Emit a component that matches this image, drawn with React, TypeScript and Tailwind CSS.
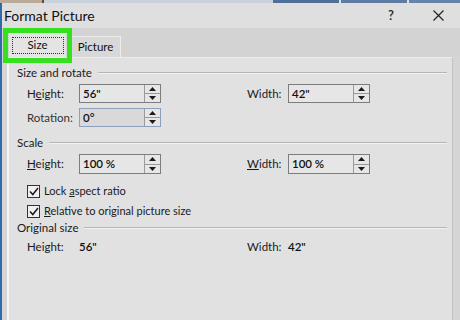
import type { ReactNode } from "react"

function Spinner() {
  return (
    <div className="flex flex-col w-[16px] h-full border-l border-[#9a9a9a] bg-[#e6e6e6]">
      <div className="flex-1 flex items-center justify-center border-b border-[#9a9a9a]">
        <svg width="7" height="4" viewBox="0 0 7 4"><path d="M0 4 L3.5 0 L7 4 Z" fill="#1a1a1a" /></svg>
      </div>
      <div className="flex-1 flex items-center justify-center">
        <svg width="7" height="4" viewBox="0 0 7 4"><path d="M0 0 L3.5 4 L7 0 Z" fill="#1a1a1a" /></svg>
      </div>
    </div>
  )
}

function NumBox({ value, disabled }: { value: string; disabled?: boolean }) {
  return (
    <div
      className={
        disabled
          ? "flex w-[82px] h-full border border-[#8aa0bc] bg-[#d9d9d9]"
          : "flex w-[82px] h-full border border-[#7c7c7c] bg-[#e6e6e6]"
      }
    >
      <div className="flex-1 pl-[3px] flex items-center text-[11.5px] font-semibold text-[#111]">{value}</div>
      <Spinner />
    </div>
  )
}

function Header({ title, className }: { title: string; className: string }) {
  return (
    <div className={"flex items-center h-[16px] pl-[8px] pr-[5px] gap-[6px] " + className}>
      <span className="text-[11.5px] text-[#1a1a1a] whitespace-nowrap">{title}</span>
      <div className="flex-1 flex flex-col">
        <div className="h-px bg-[#b5b5b5]" />
        <div className="h-px bg-[#f2f2f2]" />
      </div>
    </div>
  )
}

function Label({ children, w }: { children: ReactNode; w: string }) {
  return <span className={"text-[11.5px] text-[#1a1a1a] " + w}>{children}</span>
}

function Check({ children, className }: { children: ReactNode; className: string }) {
  return (
    <div className={"flex items-center h-[14px] pl-[18px] gap-[4px] " + className}>
      <div className="w-[13px] h-[13px] border border-[#333] bg-[#f0f0f0] flex items-center justify-center">
        <svg width="10" height="9" viewBox="0 0 10 9">
          <path d="M1 4.5 L3.8 7.5 L9 1" stroke="#1a1a1a" strokeWidth="1.5" fill="none" />
        </svg>
      </div>
      <span className="text-[11px] text-[#1a1a1a]">{children}</span>
    </div>
  )
}

export default function App() {
  return (
    <div className="w-[460px] h-[320px] flex flex-col overflow-hidden bg-[#d5d5d5] font-['Lato',sans-serif] relative">
      {/* windows behind the dialog */}
      <div className="h-[3px] flex">
        <div className="w-[42px] bg-[#b9ab98]" />
        <div className="w-[2px] bg-[#6a4a2a]" />
        <div className="w-[229px] bg-[#c9d1dc]" />
        <div className="w-[66px] bg-[#4f6f98]" />
        <div className="w-[2px] bg-[#e0e0e0]" />
        <div className="w-[66px] bg-[#5d7ba3]" />
        <div className="w-[2px] bg-[#e0e0e0]" />
        <div className="flex-1 bg-[#6683a8]" />
      </div>
      <div className="flex flex-1">
        <div className="w-[2px] bg-[#2f6aab]" />
        <div className="flex-1 flex flex-col">
          <div className="h-[25px] bg-[#dfdfdf] flex items-center pl-[2px] pr-[16px]">
            <span className="text-[14px] text-[#111] flex-1">Format Picture</span>
            <span className="text-[13px] font-semibold text-[#222] mr-[39px]">?</span>
            <svg width="11" height="11" viewBox="0 0 11 11">
              <path d="M0.5 0.5 L10.5 10.5 M10.5 0.5 L0.5 10.5" stroke="#222" strokeWidth="1.2" />
            </svg>
          </div>
          <div className="h-[29px] bg-[#d3d3d3] flex items-end pl-[7px]">
            <div className="w-[57px] h-[24px] bg-[#e4e4e4] flex items-center justify-center">
              <div className="w-[52px] h-[17px] border border-dotted border-[#333] flex items-center justify-center text-[11.5px] text-[#111]">
                Size
              </div>
            </div>
            <div className="w-[51px] h-[21px] ml-[4px] border border-b-0 border-[#ededed] bg-[#d8d8d8] flex items-center justify-center text-[11.5px] text-[#111]">
              Picture
            </div>
          </div>
          <div className="flex-1 flex pl-[5px] pr-[7px]">
            <div className="flex-1 flex flex-col bg-[#e1e1e1] border-l-2 border-l-[#f4f4f4] border-r border-r-[#c2c2c2] border-t border-t-[#ececec]">
              <Header title="Size and rotate" className="mt-[7px]" />
              <div className="flex items-center h-[19px] mt-[3px] pl-[18px]">
                <Label w="w-[52px]">H<span className="underline">e</span>ight:</Label>
                <NumBox value={'56"'} />
                <Label w="w-[41px] ml-[86px]">Width:</Label>
                <NumBox value={'42"'} />
              </div>
              <div className="flex items-center h-[19px] mt-[5px] pl-[18px]">
                <Label w="w-[52px] text-[#333]">Rotation:</Label>
                <NumBox value="0°" disabled />
              </div>
              <Header title="Scale" className="mt-[8px]" />
              <div className="flex items-center h-[20px] mt-[3px] pl-[18px]">
                <Label w="w-[52px]"><span className="underline">H</span>eight:</Label>
                <NumBox value="100 %" />
                <Label w="w-[41px] ml-[86px]"><span className="underline">W</span>idth:</Label>
                <NumBox value="100 %" />
              </div>
              <Check className="mt-[10px]">
                Lock <span className="underline">a</span>spect ratio
              </Check>
              <Check className="mt-[6px]">
                <span className="underline">R</span>elative to original picture size
              </Check>
              <Header title="Original size" className="mt-[2px]" />
              <div className="flex items-center h-[16px] mt-[3px] pl-[18px]">
                <Label w="w-[52px]">Height:</Label>
                <span className="w-[82px] text-[11.5px] font-semibold text-[#111]">56"</span>
                <Label w="w-[41px] ml-[86px]">Width:</Label>
                <span className="text-[11.5px] font-semibold text-[#111]">42"</span>
              </div>
            </div>
          </div>
        </div>
      </div>
      {/* highlight annotation around the Size tab */}
      <div className="absolute left-[3px] top-[28px] w-[69px] h-[35px] border-[5px] border-[#35e01f]" />
    </div>
  )
}
